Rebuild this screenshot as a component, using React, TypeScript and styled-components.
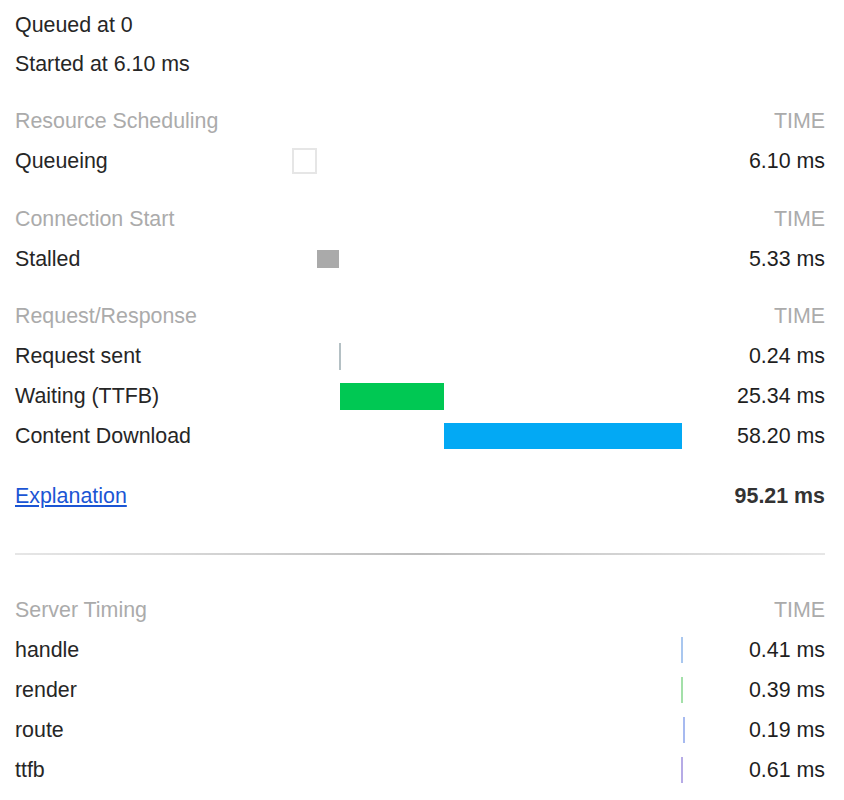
import React from "react";
import styled, { createGlobalStyle, css } from "styled-components";

const GlobalStyle = createGlobalStyle`
  html, body {
    margin: 0;
    padding: 0;
    background: #ffffff;
  }
  body {
    font-family: "Liberation Sans", Helvetica, Arial, sans-serif;
    font-size: 21.4px;
    color: #262626;
  }
`;

const TOTAL = 95.21;
const TRACK_W = 390;

const Panel = styled.div`
  padding: 6px 19px 40px 15px;
`;

const Summary = styled.div`
  display: flex;
  flex-direction: column;
`;

const SummaryLine = styled.div`
  height: 39px;
  line-height: 39px;
  color: #262626;
  white-space: nowrap;
`;

const Section = styled.section<{ $gap?: number }>`
  display: flex;
  flex-direction: column;
  margin-top: ${(p) => (p.$gap ?? 17)}px;
`;

const Row = styled.div<{ $header?: boolean }>`
  display: grid;
  grid-template-columns: 277px ${TRACK_W}px 1fr;
  height: 40px;
  line-height: 40px;
  align-items: center;
  white-space: nowrap;
  color: ${(p) => (p.$header ? "#ababab" : "#262626")};
`;

const Label = styled.div`
  overflow: visible;
`;

const Track = styled.div`
  display: flex;
  align-items: center;
  height: 100%;
  overflow: visible;
`;

const Time = styled.div<{ $bold?: boolean }>`
  text-align: right;
  color: ${(p) => (p.$bold ? "#333333" : "#1e1e1e")};
  font-weight: ${(p) => (p.$bold ? 700 : 400)};
`;

const HeaderTime = styled.div`
  text-align: right;
  text-transform: uppercase;
  color: #ababab;
`;

type BarKind =
  | "queueing"
  | "stalled"
  | "sent"
  | "waiting"
  | "download"
  | "handle"
  | "render"
  | "route"
  | "ttfb";

const barStyles: Record<BarKind, ReturnType<typeof css>> = {
  queueing: css`
    height: 26px;
    background: #ffffff;
    border: 2px solid #e6e6e6;
  `,
  stalled: css`
    height: 18px;
    background: #aaaaaa;
  `,
  sent: css`
    height: 27px;
    min-width: 2px;
    background: #b4c0c4;
  `,
  waiting: css`
    height: 27px;
    background: #00c853;
  `,
  download: css`
    height: 26px;
    background: #03a9f4;
  `,
  handle: css`
    height: 26px;
    min-width: 2px;
    background: #a9c7ef;
  `,
  render: css`
    height: 26px;
    min-width: 2px;
    background: #a3e0a9;
  `,
  route: css`
    height: 26px;
    min-width: 2px;
    background: #a7baf0;
  `,
  ttfb: css`
    height: 26px;
    min-width: 2px;
    background: #b6abe6;
  `,
};

const Bar = styled.div<{ $kind: BarKind }>`
  flex: none;
  box-sizing: border-box;
  ${(p) => barStyles[p.$kind]}
`;

const Divider = styled.hr`
  border: none;
  height: 2px;
  margin: 37px 0 0 0;
  background: linear-gradient(
    to right,
    #e6e6e6 0%,
    #cfcfcf 30%,
    #bdbdbd 50%,
    #cfcfcf 70%,
    #e6e6e6 100%
  );
`;

const ExplanationLink = styled.a`
  color: #1b55d4;
  text-decoration: underline;
  text-underline-offset: 2px;
  cursor: pointer;
`;

type Entry = { label: string; kind: BarKind; start: number; dur: number; time: string };

const px = (ms: number) => (ms / TOTAL) * TRACK_W;

function TimingRow({ e }: { e: Entry }) {
  return (
    <Row>
      <Label>{e.label}</Label>
      <Track>
        <Bar $kind={e.kind} style={{ marginLeft: Math.round(px(e.start)), width: px(e.dur) }} />
      </Track>
      <Time>{e.time}</Time>
    </Row>
  );
}

function SectionHeader({ title }: { title: string }) {
  return (
    <Row $header>
      <Label>{title}</Label>
      <div />
      <HeaderTime>Time</HeaderTime>
    </Row>
  );
}

const scheduling: Entry[] = [
  { label: "Queueing", kind: "queueing", start: 0, dur: 6.1, time: "6.10 ms" },
];
const connection: Entry[] = [
  { label: "Stalled", kind: "stalled", start: 6.1, dur: 5.33, time: "5.33 ms" },
];
const reqres: Entry[] = [
  { label: "Request sent", kind: "sent", start: 11.43, dur: 0.24, time: "0.24 ms" },
  { label: "Waiting (TTFB)", kind: "waiting", start: 11.67, dur: 25.34, time: "25.34 ms" },
  { label: "Content Download", kind: "download", start: 37.01, dur: 58.2, time: "58.20 ms" },
];
const server: Entry[] = [
  { label: "handle", kind: "handle", start: 94.96, dur: 0.41, time: "0.41 ms" },
  { label: "render", kind: "render", start: 94.96, dur: 0.39, time: "0.39 ms" },
  { label: "route", kind: "route", start: 95.45, dur: 0.19, time: "0.19 ms" },
  { label: "ttfb", kind: "ttfb", start: 94.96, dur: 0.61, time: "0.61 ms" },
];

export default function App() {
  return (
    <>
      <GlobalStyle />
      <Panel>
        <Summary>
          <SummaryLine>Queued at 0</SummaryLine>
          <SummaryLine>Started at 6.10 ms</SummaryLine>
        </Summary>

        <Section $gap={17}>
          <SectionHeader title="Resource Scheduling" />
          {scheduling.map((e) => (
            <TimingRow key={e.label} e={e} />
          ))}
        </Section>

        <Section $gap={18}>
          <SectionHeader title="Connection Start" />
          {connection.map((e) => (
            <TimingRow key={e.label} e={e} />
          ))}
        </Section>

        <Section $gap={17}>
          <SectionHeader title="Request/Response" />
          {reqres.map((e) => (
            <TimingRow key={e.label} e={e} />
          ))}
        </Section>

        <Section $gap={20}>
          <Row>
            <Label>
              <ExplanationLink>Explanation</ExplanationLink>
            </Label>
            <div />
            <Time $bold>95.21 ms</Time>
          </Row>
        </Section>

        <Divider />

        <Section $gap={35}>
          <SectionHeader title="Server Timing" />
          {server.map((e) => (
            <TimingRow key={e.label} e={e} />
          ))}
        </Section>
      </Panel>
    </>
  );
}
